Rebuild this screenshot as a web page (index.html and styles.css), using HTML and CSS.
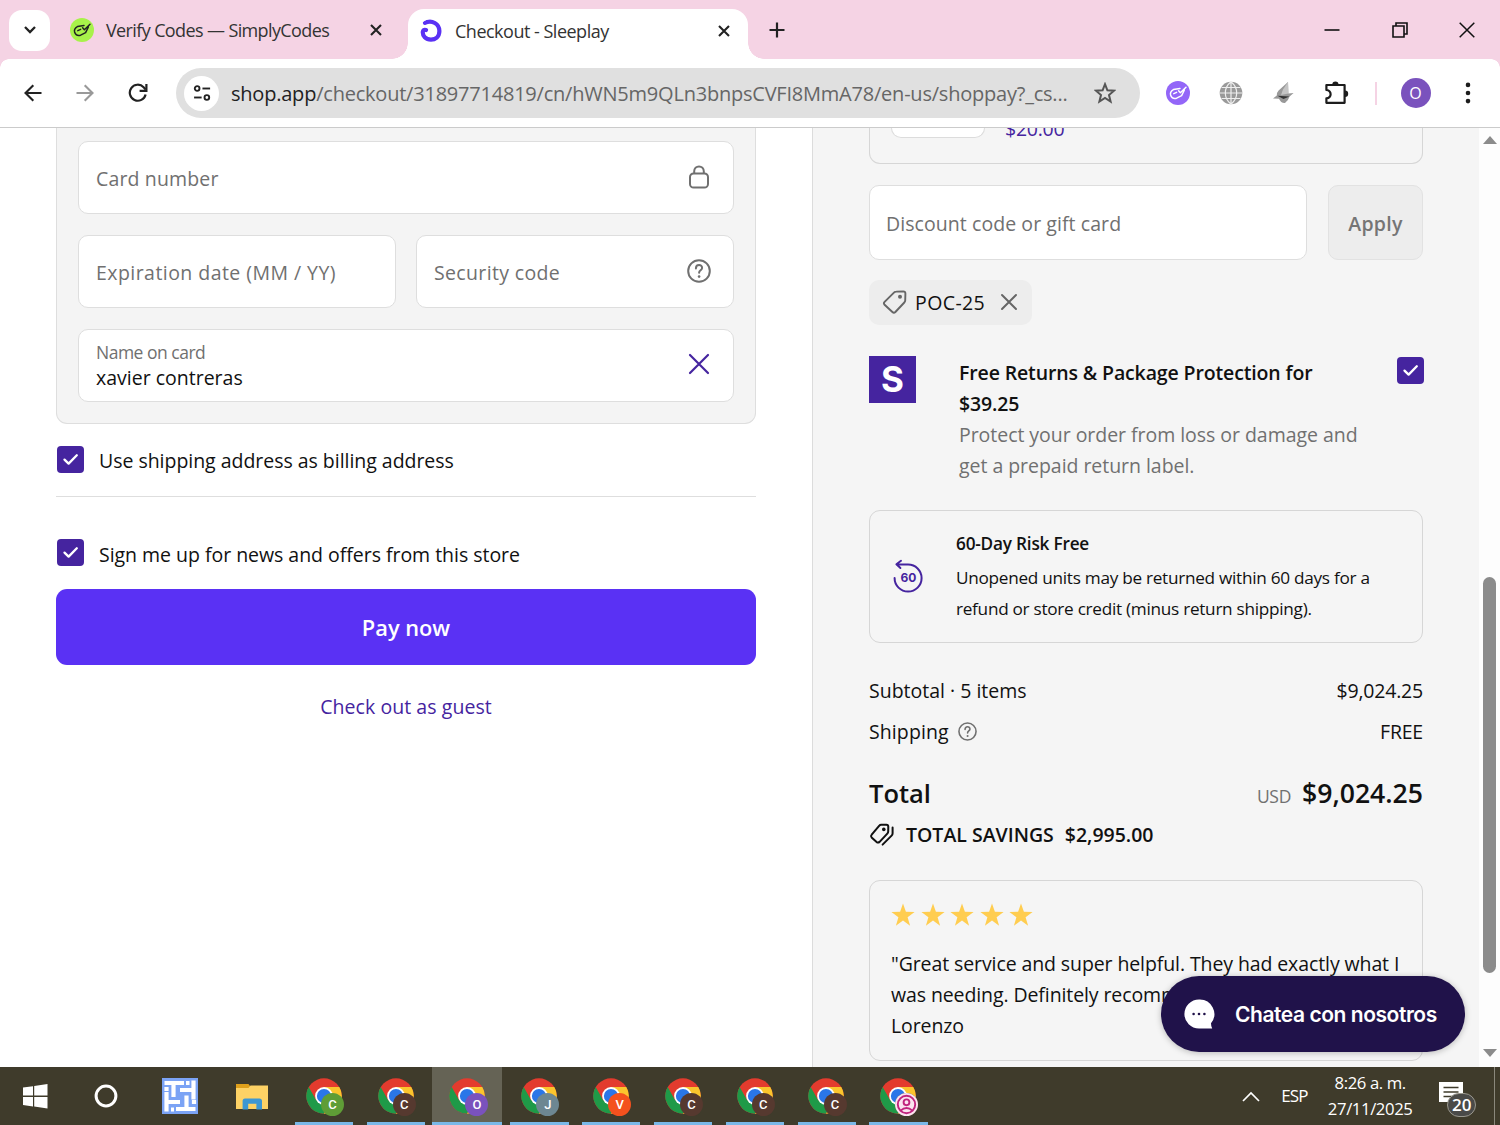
FILE: index.html
```html
<!DOCTYPE html>
<html lang="en">
<head>
  <meta charset="UTF-8" />
  <meta name="viewport" content="width=device-width, initial-scale=1.0"/>
  <title>Checkout - Sleeplay</title>
  <link rel="stylesheet" href="styles.css">
</head>
<body>
  <svg class="defs" width="0" height="0">
    <symbol id="chrome" viewBox="0 0 36 36">
      <circle cx="18" cy="18" r="17.7" fill="#e33b2e"/>
      <path d="M2.7 9.1 A17.7 17.7 0 0 0 18 35.7 L25.7 22.4 L18 18 L10.3 22.4Z" fill="#1f9a48"/>
      <path d="M33.3 9.1 A17.7 17.7 0 0 1 18 35.7 L25.7 22.4 L18 9.1Z" fill="#fbc52d"/>
      <circle cx="18" cy="18" r="8.9" fill="#fff"/>
      <circle cx="18" cy="18" r="7.1" fill="#2a76e8"/>
    </symbol>
    <symbol id="check" viewBox="0 0 27 27">
      <path d="M7.5 13.6 L11.6 17.6 L19.8 9.2" fill="none" stroke="#fff" stroke-width="2.3" stroke-linecap="round" stroke-linejoin="round"/>
    </symbol>
    <symbol id="help" viewBox="0 0 24 24">
      <circle cx="12" cy="12" r="10.8" fill="none" stroke="currentColor" stroke-width="2"/>
      <path d="M8.9 9.4 C9 4.9 15.2 5.1 15.1 9 C15 11.4 12.1 11.3 12.1 13.8" fill="none" stroke="currentColor" stroke-width="2" stroke-linecap="round"/>
      <circle cx="12.1" cy="17.6" r="1.3" fill="currentColor"/>
    </symbol>
    <symbol id="star" viewBox="0 0 24 24">
      <path d="M12 0.5 L14.9 8.7 L23.6 8.9 L16.6 14.2 L19.1 22.7 L12 17.6 L4.9 22.7 L7.4 14.2 L0.4 8.9 L9.1 8.7Z" fill="#ffcd50"/>
    </symbol>
    <symbol id="codes" viewBox="0 0 24 24">
      <path d="M14 7.4 L7.4 8.6 Q3.8 10.6 4.6 14 Q6 18.4 10.6 17.2 L15.6 14.6 L18.4 9 M12.6 9.8 L14.4 11.8 L20 6.2 M7.8 12.6 L10.6 11.4" fill="none" stroke="currentColor" stroke-width="1.5" stroke-linecap="round" stroke-linejoin="round"/>
    </symbol>
  </svg>

  <div class="tabstrip">
    <div class="tab-search">
      <svg width="14" height="10" viewBox="0 0 14 10"><path d="M2 2 L7 7 L12 2" fill="none" stroke="#222" stroke-width="2.3"/></svg>
    </div>
    <div class="tab">
      <svg class="favicon lime" width="24" height="24"><use href="#codes"/></svg>
      <span class="tab-title w-verify">Verify Codes — SimplyCodes</span>
      <svg width="12" height="12" viewBox="0 0 12 12"><path d="M1 1 L11 11 M11 1 L1 11" stroke="#222" stroke-width="2.1"/></svg>
    </div>
    <div class="tab active">
      <svg class="favicon" width="24" height="24" viewBox="0 0 24 24"><path d="M6 3.8 C13 .8 20.3 4.6 20.4 12 C20.4 18 16 20.6 12 20.6 C6.5 20.6 3.6 17 3.8 13 C4 10.8 5 10.4 7 11" fill="none" stroke="#5a31f4" stroke-width="4.2" stroke-linecap="round"/></svg>
      <span class="tab-title">Checkout - Sleeplay</span>
      <svg width="12" height="12" viewBox="0 0 12 12"><path d="M1 1 L11 11 M11 1 L1 11" stroke="#222" stroke-width="2.1"/></svg>
    </div>
    <svg class="new-tab" width="16" height="16" viewBox="0 0 16 16"><path d="M8 .5 V15.5 M.5 8 H15.5" stroke="#222" stroke-width="2.2"/></svg>
    <div class="win-buttons">
      <svg width="16" height="16" viewBox="0 0 16 16"><path d="M.5 8 H15.5" stroke="#111" stroke-width="1.6"/></svg>
      <svg width="16" height="16" viewBox="0 0 16 16"><path d="M1 4 H12 V15 H1Z M4 4 V1 H15 V12 H12" fill="none" stroke="#111" stroke-width="1.6"/></svg>
      <svg width="16" height="16" viewBox="0 0 16 16"><path d="M.7 .7 L15.3 15.3 M15.3 .7 L.7 15.3" stroke="#111" stroke-width="1.5"/></svg>
    </div>
  </div>

  <div class="toolbar">
    <div class="nav">
      <svg width="18" height="18" viewBox="0 0 18 18"><path d="M17.5 9 H2 M9.3 1.2 L1.5 9 L9.3 16.8" fill="none" stroke="#222" stroke-width="2.1"/></svg>
      <svg width="18" height="18" viewBox="0 0 18 18"><path d="M.5 9 H16 M8.7 1.2 L16.5 9 L8.7 16.8" fill="none" stroke="#999" stroke-width="2.1"/></svg>
      <svg width="20" height="20" viewBox="0 0 20 20"><path d="M17.6 11.5 A8 8 0 1 1 15.6 4.2 L17.6 6.4" fill="none" stroke="#222" stroke-width="2.2"/><path d="M18.4 1 V7.9 H11.6" fill="none" stroke="#222" stroke-width="2.2"/></svg>
    </div>
    <div class="omnibox">
      <div class="site-info">
        <svg width="18" height="18" viewBox="0 0 20 18"><g fill="none" stroke="#222" stroke-width="2.1"><circle cx="4.6" cy="4" r="2.6"/><path d="M10.5 4 H19"/><circle cx="15.4" cy="14" r="2.6"/><path d="M1.2 14 H9.6"/></g></svg>
      </div>
      <div class="url"><b>shop.app</b>/checkout/31897714819/cn/hWN5m9QLn3bnpsCVFI8MmA78/en-us/shoppay?_cs...</div>
      <svg width="22" height="22" viewBox="0 0 22 22"><path d="M11 2.2 L13.4 8.3 L20 8.7 L15 13 L16.6 19.5 L11 15.9 L5.4 19.5 L7 13 L2 8.7 L8.6 8.3Z" fill="none" stroke="#555" stroke-width="2"/></svg>
    </div>
    <div class="extensions">
      <svg class="favicon violet" width="24" height="24"><use href="#codes"/></svg>
      <svg width="24" height="24" viewBox="0 0 24 24"><circle cx="12" cy="12" r="11.3" fill="#999"/><path d="M12 0 V24 M1 12 H23 M2.6 6.5 H21.4 M2.6 17.5 H21.4 M12 .8 C4.4 7 4.4 17 12 23.2 C19.6 17 19.6 7 12 .8" fill="none" stroke="#eee" stroke-width="1.2"/></svg>
      <svg width="24" height="24" viewBox="0 0 24 24"><path d="M17 1 L7.6 9.6 Q5.4 12 5.8 14.6 L2 17.6 L8 17.8 Q10 22.4 14 22 Q17.6 19 18.6 15.4 L22.6 12 L17.4 12.6Z" fill="#999"/><path d="M17 1 L12 8.6 L10 14 L17.4 12.6Z" fill="#c4c4c4"/><path d="M6.5 14.8 L18.4 15.4 L12.5 17.9Z" fill="#333"/></svg>
      <svg width="26" height="26" viewBox="0 0 26 26"><path d="M2.4 5 H20.6 V22.8 H2.4 V18.4 C8 17.6 8 10.8 2.4 10Z" fill="none" stroke="#1d1d1d" stroke-width="2.2" stroke-linejoin="round"/><path d="M8.3 4.6 A3.1 3.1 0 0 1 14.5 4.6Z M21 10.6 A3.2 3.2 0 0 1 21 17Z" fill="#1d1d1d"/></svg>
      <span class="separator"></span>
      <span class="avatar">O</span>
      <svg class="menu" width="6" height="22" viewBox="0 0 6 22"><g fill="#1d1d1d"><circle cx="3" cy="2.9" r="2.3"/><circle cx="3" cy="11" r="2.3"/><circle cx="3" cy="19.1" r="2.3"/></g></svg>
    </div>
  </div>

  <div class="page">
    <div class="payment">
      <div class="card-form">
        <div class="field"><span class="w-card">Card number</span>
          <svg width="24" height="26" viewBox="0 0 24 26"><g fill="none" stroke="#707070" stroke-width="2"><rect x="3" y="9.5" width="18" height="14" rx="3.6"/><path d="M7.2 9.5 V7.2 A4.8 4.8 0 0 1 16.8 7.2 V9.5"/></g></svg>
        </div>
        <div class="field-row">
          <div class="field"><span class="w-exp">Expiration date (MM / YY)</span></div>
          <div class="field"><span class="w-sec">Security code</span>
            <svg class="gray" width="24" height="24"><use href="#help"/></svg>
          </div>
        </div>
        <div class="field filled">
          <div>
            <div class="field-label">Name on card</div>
            <div class="field-value">xavier contreras</div>
          </div>
          <svg width="24" height="24" viewBox="0 0 24 24"><path d="M3 3 L21 21 M21 3 L3 21" stroke="#45249f" stroke-width="2.2" stroke-linecap="round"/></svg>
        </div>
      </div>
      <div class="option">
        <svg class="checkbox" width="27" height="27"><use href="#check"/></svg>
        <span>Use shipping address as billing address</span>
      </div>
      <div class="option news">
        <svg class="checkbox" width="27" height="27"><use href="#check"/></svg>
        <span>Sign me up for news and offers from this store</span>
      </div>
      <div class="pay-btn">Pay now</div>
      <div class="guest">Check out as guest</div>
    </div>

    <div class="summary">
      <div class="upsell">
        <span class="stepper"></span>
        <span class="upsell-price">$20.00</span>
      </div>
      <div class="discount">
        <div class="code-input"><span>Discount code or gift card</span></div>
        <div class="apply">Apply</div>
      </div>
      <div class="chip">
        <svg width="26" height="26" viewBox="0 0 26 26"><path d="M14.2 2.6 L21.2 2.4 Q23.4 2.4 23.4 4.6 L23.2 11.6 Q23.2 12.6 22.3 13.5 L13.4 23 Q11.9 24.4 10.4 23 L2.6 15.8 Q1.2 14.3 2.6 12.8 L12.2 3.4 Q13 2.6 14.2 2.6Z" fill="none" stroke="#666" stroke-width="1.9"/><circle cx="18" cy="7.7" r="2" fill="#666"/></svg>
        <span>POC-25</span>
        <svg width="18" height="18" viewBox="0 0 18 18"><path d="M2 2 L16 16 M16 2 L2 16" stroke="#666" stroke-width="2" stroke-linecap="round"/></svg>
      </div>
      <div class="protection">
        <div class="logo">S</div>
        <div class="protection-text">
          <div class="strong">Free Returns &amp; Package Protection for</div>
          <div class="strong">$39.25</div>
          <div class="muted">Protect your order from loss or damage and</div>
          <div class="muted">get a prepaid return label.</div>
        </div>
        <svg class="checkbox" width="27" height="27"><use href="#check"/></svg>
      </div>
      <div class="risk">
        <svg width="34" height="36" viewBox="0 0 34 36"><path d="M3.6 19 A13.5 13.5 0 1 0 17 5.6 L6 5.2 M10 1.8 L5.4 5.2 L9.4 9" fill="none" stroke="#45249f" stroke-width="2" stroke-linecap="round" stroke-linejoin="round"/><text x="17.5" y="23.4" class="sixty">60</text></svg>
        <div>
          <div class="risk-title">60-Day Risk Free</div>
          <div>Unopened units may be returned within 60 days for a</div>
          <div>refund or store credit (minus return shipping).</div>
        </div>
      </div>
      <div class="line"><span>Subtotal · 5 items</span><span class="amount">$9,024.25</span></div>
      <div class="line"><span class="with-icon">Shipping <svg class="gray" width="19" height="19" viewBox="0 0 24 24"><use href="#help"/></svg></span><span class="amount">FREE</span></div>
      <div class="total"><span>Total</span><span class="total-amount"><small>USD</small>$9,024.25</span></div>
      <div class="savings">
        <svg width="26" height="24" viewBox="0 0 26 24"><g fill="none" stroke="#111" stroke-width="2" stroke-linecap="round" stroke-linejoin="round"><path d="M12.2 1.8 L17.4 1.8 Q19.3 1.9 19.3 3.8 L19.2 8.4 Q19.2 9.6 18.3 10.6 L10.6 18.9 Q9 20.2 7.6 19 L2.6 14.4 Q1.4 13 2.7 11.6 L10.1 2.8 Q11 1.8 12.2 1.8Z"/><path d="M23.6 4.6 V10.2 Q23.6 11.6 22.6 12.6 L13.6 21.6"/></g><circle cx="14.8" cy="6.4" r="1.8" fill="#111"/></svg>
        <span class="savings-label">TOTAL SAVINGS</span><span>$2,995.00</span>
      </div>
      <div class="review">
        <div class="stars">
          <svg width="24" height="24"><use href="#star"/></svg>
          <svg width="24" height="24"><use href="#star"/></svg>
          <svg width="24" height="24"><use href="#star"/></svg>
          <svg width="24" height="24"><use href="#star"/></svg>
          <svg width="24" height="24"><use href="#star"/></svg>
        </div>
        <div>"Great service and super helpful. They had exactly what I</div>
        <div>was needing. Definitely recommend."</div>
        <div>Lorenzo</div>
      </div>
    </div>

    <div class="scrollbar">
      <svg width="14" height="8" viewBox="0 0 14 8"><path d="M7 0 L14 8 H0Z" fill="#8b8b8b"/></svg>
      <span class="thumb"></span>
      <svg width="14" height="8" viewBox="0 0 14 8"><path d="M7 8 L14 0 H0Z" fill="#8b8b8b"/></svg>
    </div>

    <div class="chat">
      <svg width="32" height="32" viewBox="0 0 32 32"><path d="M16 1.4 A14.6 14.6 0 1 0 16 30.6 H29.2 Q28 28.4 28 25.2 A14.6 14.6 0 0 0 16 1.4Z" fill="#fff"/><g fill="#20124a"><circle cx="10.6" cy="16" r="1.3"/><circle cx="16" cy="16" r="1.3"/><circle cx="21.4" cy="16" r="1.3"/></g></svg>
      <span>Chatea con nosotros</span>
    </div>
  </div>

  <div class="taskbar">
    <div class="slot start"><svg width="25" height="25" viewBox="0 0 25 25"><path d="M0 3.6 L10 2.2 V11.6 H0Z M11.2 2 L24.5 0 V11.6 H11.2Z M0 12.9 H10 V22.4 L0 21Z M11.2 12.9 H24.5 V24.6 L11.2 22.6Z" fill="#fff"/></svg></div>
    <div class="slot cortana"><svg width="24" height="24" viewBox="0 0 24 24"><circle cx="12" cy="12" r="9.9" fill="none" stroke="#fff" stroke-width="3"/></svg></div>
    <div class="slot"><svg width="36" height="36" viewBox="0 0 36 36"><rect width="36" height="36" fill="#7ba3f5"/><path d="M2.5 5 H22 M11.5 5 V19 M31.5 2.5 V21.5 M31.5 12 H18 M33.5 31 H14 M24.5 31 V17.5 M4.5 33.5 V14 M4.5 24 H18 M4.5 9 V13 M24 5 H27.5 M32 26 V22 M9 31.5 H12" fill="none" stroke="#fff" stroke-width="4.2"/></svg></div>
    <div class="slot"><svg width="32" height="27" viewBox="0 0 32 27"><path d="M0 1 H12.5 L14 3 V8 H0Z" fill="#dfa01b"/><path d="M0 5 H12.5 L14.5 2.6 H32 V26 H0Z" fill="#fdd265"/><path d="M6.6 26.4 V18 Q6.6 15.4 9 15.4 H23.4 Q26 15.4 26 18 V26.4 H20.4 V20.8 H12.2 V26.4Z" fill="#3d97d3"/></svg></div>
    <div class="slot app"><svg width="36" height="36"><use href="#chrome"/></svg><span class="badge green">C</span></div>
    <div class="slot app"><svg width="36" height="36"><use href="#chrome"/></svg><span class="badge">C</span></div>
    <div class="slot app current"><svg width="36" height="36"><use href="#chrome"/></svg><span class="badge purple">O</span></div>
    <div class="slot app"><svg width="36" height="36"><use href="#chrome"/></svg><span class="badge slate">J</span></div>
    <div class="slot app"><svg width="36" height="36"><use href="#chrome"/></svg><span class="badge orange">V</span></div>
    <div class="slot app"><svg width="36" height="36"><use href="#chrome"/></svg><span class="badge">C</span></div>
    <div class="slot app"><svg width="36" height="36"><use href="#chrome"/></svg><span class="badge">C</span></div>
    <div class="slot app"><svg width="36" height="36"><use href="#chrome"/></svg><span class="badge">C</span></div>
    <div class="slot app"><svg width="36" height="36"><use href="#chrome"/></svg><span class="badge pink"><svg width="23" height="23" viewBox="0 0 23 23"><circle cx="11.5" cy="11.5" r="11.5" fill="#fbe4f0"/><g fill="none" stroke="#c0247e" stroke-width="1.9"><circle cx="11.5" cy="11.5" r="8.7"/><circle cx="11.5" cy="9.3" r="2.9"/><path d="M5.6 17.6 Q11.5 12.2 17.4 17.6"/></g></svg></span></div>
    <div class="tray">
      <svg width="18" height="11" viewBox="0 0 18 11"><path d="M1 10 L9 2 L17 10" fill="none" stroke="#fff" stroke-width="1.7"/></svg>
      <span class="lang">ESP</span>
      <div class="clock"><div class="time">8:26 a. m.</div><div class="date">27/11/2025</div></div>
      <div class="notify">
        <svg width="24" height="24" viewBox="0 0 24 24"><path d="M0 0 H24 V20 H13 L9 24 V20 H0Z" fill="#fff"/><path d="M4.5 5.5 H19.5 M4.5 10 H19.5 M4.5 14.5 H13" stroke="#3f3b2b" stroke-width="1.6"/></svg>
        <span class="count">20</span>
      </div>
      <span class="show-desktop"></span>
    </div>
  </div>
</body>
</html>
```
FILE: styles.css
```css
* {
  box-sizing: border-box;
}

body {
  margin: 0;
  width: 1500px;
  height: 1125px;
  overflow: hidden;
  display: flex;
  flex-direction: column;
  font-family: "Open Sans", "Noto Sans", sans-serif;
  font-size: 19.5px;
  color: #111;
  background-color: #fff;
  white-space: nowrap;
}

svg {
  display: block;
  flex: none;
}

.defs {
  position: absolute;
}

/* browser tabs */
.tabstrip {
  display: flex;
  align-items: center;
  height: 59px;
  flex: none;
  padding: 1px 25px 0 9px;
  background-color: #f5d3e4;
}

.tab-search {
  display: flex;
  align-items: center;
  justify-content: center;
  width: 41px;
  height: 41px;
  border-radius: 13px;
  background-color: #fff;
}

.tab {
  display: flex;
  align-items: center;
  width: 358px;
  padding: 0 26px 0 20px;
  font-size: 18px;
  color: #333;
}

.tab-title {
  flex: 1;
  padding-left: 12px;
  letter-spacing: -0.5px;
}

.w-verify {
  letter-spacing: -0.62px;
}

.tab.active {
  position: relative;
  width: 340px;
  height: 50px;
  margin-top: 8px;
  padding: 0 18px 6px 11px;
  border-radius: 16px 16px 0 0;
  background-color: #fff;
}

.tab.active::before,
.tab.active::after {
  content: "";
  position: absolute;
  bottom: 0;
  width: 16px;
  height: 16px;
}

.tab.active::before {
  left: -16px;
  background: radial-gradient(circle at 0 0, #f5d3e4 15.5px, #fff 16px);
}

.tab.active::after {
  right: -16px;
  background: radial-gradient(circle at 100% 0, #f5d3e4 15.5px, #fff 16px);
}

.favicon {
  border-radius: 50%;
}

.lime {
  color: #222;
  background-color: #a8f24a;
}

.violet {
  color: #fff;
  background-color: #9366f8;
}

.new-tab {
  margin-left: 21px;
}

.win-buttons {
  display: flex;
  gap: 51.5px;
  margin-left: auto;
}

/* address bar */
.toolbar {
  position: relative;
  display: flex;
  align-items: center;
  height: 69px;
  flex: none;
  padding: 0 29px 0 24px;
  border-bottom: 1px solid #cbcbcb;
  background: radial-gradient(circle at 9px 9px, #fff 8.5px, #f5d3e4 9px) 0 0 / 9px 9px no-repeat,
    radial-gradient(circle at 0 9px, #fff 8.5px, #f5d3e4 9px) 100% 0 / 9px 9px no-repeat, #fff;
}

.nav {
  display: flex;
  align-items: center;
  gap: 34px;
  width: 152px;
}

.omnibox {
  display: flex;
  align-items: center;
  width: 964px;
  height: 50px;
  padding: 0 24px 0 8px;
  border-radius: 25px;
  background-color: #e0e0e0;
}

.site-info {
  display: flex;
  align-items: center;
  justify-content: center;
  width: 35px;
  height: 35px;
  border-radius: 50%;
  background-color: #fff;
}

.url {
  flex: 1;
  padding-left: 12px;
  font-size: 20px;
  letter-spacing: -0.22px;
  color: #666;
}

.url b {
  font-weight: 400;
  color: #222;
}

.extensions {
  display: flex;
  align-items: center;
  flex: 1;
  gap: 28.5px;
  padding-left: 26px;
}

.separator {
  width: 2px;
  height: 23px;
  margin-left: -3px;
  background-color: #f5d3e4;
}

.avatar {
  display: flex;
  align-items: center;
  justify-content: center;
  width: 30px;
  height: 30px;
  margin-left: -5px;
  border-radius: 50%;
  background-color: #7a52bd;
  color: #fff;
  font-size: 16px;
}

.menu {
  margin-left: auto;
}

/* page */
.page {
  position: relative;
  display: flex;
  height: 939px;
  flex: none;
  overflow: hidden;
}

.payment {
  width: 812px;
  padding: 0 56px;
}

.card-form {
  display: flex;
  flex-direction: column;
  gap: 21px;
  height: 296px;
  padding: 13px 21px 0;
  border: 1px solid #dedede;
  border-top: none;
  border-radius: 0 0 11px 11px;
  background-color: #f4f4f4;
}

.field {
  display: flex;
  align-items: center;
  justify-content: space-between;
  flex: 1;
  max-height: 73px;
  min-height: 73px;
  padding: 2px 22px 0 17px;
  border: 1px solid #dedede;
  border-radius: 10px;
  background-color: #fff;
  color: #707070;
}

.field svg {
  margin-top: -3px;
}

.field-row {
  display: flex;
  gap: 20px;
}

.w-card {
  letter-spacing: 0.15px;
}

.w-exp {
  letter-spacing: 0.45px;
}

.w-sec {
  letter-spacing: 0.35px;
}

.filled {
  padding-top: 0;
}

.field-label {
  line-height: 25px;
  font-size: 17.5px;
  letter-spacing: -0.5px;
}

.field-value {
  line-height: 26px;
  color: #111;
}

.option {
  display: flex;
  align-items: center;
  gap: 15px;
  height: 73px;
  padding: 0 0 2px 1px;
  border-bottom: 1px solid #dedede;
  letter-spacing: -0.03px;
}

.option.news {
  height: 92px;
  padding-top: 21px;
  border-bottom: none;
}

.option span {
  padding-top: 3px;
}

.checkbox {
  border-radius: 4px;
  background-color: #45249f;
}

.pay-btn {
  display: flex;
  align-items: center;
  justify-content: center;
  height: 76px;
  padding-top: 1px;
  border-radius: 11px;
  background-color: #5a31f4;
  color: #fff;
  font-size: 21.8px;
  font-weight: 600;
}

.guest {
  margin-top: 27px;
  line-height: 30px;
  text-align: center;
  letter-spacing: 0.06px;
  color: #45249f;
}

/* order summary */
.summary {
  width: 667px;
  padding: 0 56px;
  border-left: 1px solid #dcdcdc;
  background-color: #f5f5f5;
}

.upsell {
  display: flex;
  height: 36px;
  padding-left: 21px;
  border: 1px solid #d6d6d6;
  border-top: none;
  border-radius: 0 0 11px 11px;
}

.stepper {
  width: 94px;
  height: 10px;
  border: 1px solid #dcdcdc;
  border-top: none;
  border-radius: 0 0 10px 10px;
  background-color: #fff;
}

.upsell-price {
  margin: -14px 0 0 20px;
  line-height: 30px;
  letter-spacing: -0.25px;
  color: #45249f;
}

.discount {
  display: flex;
  gap: 21px;
  margin-top: 21px;
}

.code-input {
  display: flex;
  align-items: center;
  flex: 1;
  height: 75px;
  padding: 1px 16px 0;
  border: 1px solid #dedede;
  border-radius: 10px;
  background-color: #fff;
  letter-spacing: 0.07px;
  color: #707070;
}

.apply {
  display: flex;
  align-items: center;
  justify-content: center;
  width: 95px;
  padding-top: 1px;
  border: 1px solid #e2e2e2;
  border-radius: 10px;
  background-color: #ededed;
  color: #757575;
  font-weight: 600;
  letter-spacing: 0.3px;
}

.chip {
  display: flex;
  align-items: center;
  width: 163px;
  height: 45px;
  margin-top: 20px;
  padding: 0 0 1px 13px;
  border-radius: 10px;
  background-color: #ededed;
}

.chip span {
  flex: 1;
  padding-left: 7px;
  letter-spacing: 0.4px;
}

.chip svg:last-child {
  margin-right: 14px;
}

.protection {
  display: flex;
  height: 155px;
  margin-top: 30px;
}

.logo {
  width: 47px;
  height: 47px;
  margin-top: 1px;
  background-color: #45249f;
  color: #fff;
  font-family: Inter, sans-serif;
  font-size: 35px;
  font-weight: 700;
  line-height: 47px;
  text-align: center;
}

.protection-text {
  flex: 1;
  padding: 2px 0 0 43px;
  line-height: 31px;
}

.protection .checkbox {
  margin: 2px -1px 0 0;
}

.strong {
  font-weight: 600;
  letter-spacing: -0.13px;
}

.muted {
  letter-spacing: -0.04px;
  color: #707070;
}

.risk {
  display: flex;
  align-items: center;
  height: 133px;
  padding: 0 0 0 21px;
  border: 1px solid #d6d6d6;
  border-radius: 11px;
  font-size: 17.2px;
  letter-spacing: -0.28px;
  line-height: 31px;
}

.risk > div {
  padding: 0 0 2px 31px;
}

.risk-title {
  margin-bottom: 3px;
  font-weight: 600;
  letter-spacing: -0.2px;
}

.sixty {
  font-family: Inter, sans-serif;
  font-size: 12px;
  font-weight: 700;
  letter-spacing: 0;
  fill: #45249f;
  text-anchor: middle;
}

.line {
  display: flex;
  align-items: center;
  justify-content: space-between;
  height: 41px;
}

.risk + .line {
  margin-top: 27px;
}

.amount {
  letter-spacing: -0.2px;
}

.with-icon {
  display: flex;
  align-items: center;
  gap: 9px;
  letter-spacing: 0.1px;
}

.gray {
  color: #707070;
}

.total {
  display: flex;
  align-items: baseline;
  justify-content: space-between;
  margin-top: 20px;
  height: 42px;
  line-height: 42px;
  font-size: 25.5px;
  font-weight: 600;
}

.total-amount {
  font-size: 26.6px;
}

.total small {
  margin-right: 11px;
  font-size: 17.5px;
  font-weight: 400;
  letter-spacing: -0.3px;
  color: #707070;
}

.savings {
  display: flex;
  align-items: center;
  height: 41px;
  font-weight: 600;
}

.savings-label {
  padding: 0 11px;
}

.review {
  height: 181px;
  margin-top: 25px;
  padding: 22px 20px 0 21px;
  border: 1px solid #d6d6d6;
  border-radius: 11px;
  letter-spacing: -0.1px;
  line-height: 31px;
}

.stars {
  display: flex;
  gap: 5.5px;
  margin-bottom: 21px;
}

/* scrollbar */
.scrollbar {
  display: flex;
  flex-direction: column;
  align-items: center;
  width: 21px;
  padding: 8px 0 10px;
  background-color: #fdfdfd;
}

.thumb {
  width: 13px;
  height: 396px;
  margin: 433px 0 auto;
  border-radius: 7px;
  background-color: #8b8b8b;
}

/* floats over the order summary */
.chat {
  position: absolute;
  right: 35px;
  bottom: 15px;
  display: flex;
  align-items: center;
  gap: 20px;
  width: 304px;
  height: 76px;
  padding-left: 22px;
  border-radius: 38px;
  background-color: #20124a;
  box-shadow: 0 1px 6px rgba(0, 0, 0, 0.25);
  color: #fff;
  font-family: Inter, sans-serif;
  font-weight: 600;
  font-size: 21px;
  letter-spacing: -0.45px;
}

/* taskbar */
.taskbar {
  display: flex;
  height: 58px;
  flex: none;
  background-color: #3f3b2b;
  color: #fff;
}

.slot {
  position: relative;
  display: flex;
  align-items: center;
  justify-content: center;
  width: 72px;
}

.start {
  padding-right: 2px;
}

.cortana {
  padding-right: 4px;
}

.app {
  width: 71.8px;
}

.app::after {
  content: "";
  position: absolute;
  left: 7px;
  right: 6.5px;
  bottom: 0;
  height: 3px;
  background-color: #79b8e8;
}

.app.current {
  width: 70px;
  margin: 0 0.9px;
  background-color: #656355;
}

.app.current::after {
  left: 0;
  right: 0;
}

.badge {
  position: absolute;
  left: 33px;
  top: 26px;
  width: 23px;
  height: 23px;
  border-radius: 50%;
  background-color: #56392f;
  font-family: Roboto, sans-serif;
  font-size: 13px;
  font-weight: 500;
  line-height: 23px;
  text-align: center;
}

.green {
  background-color: #5f9d36;
}

.purple {
  background-color: #7a52bd;
}

.slate {
  background-color: #6d8792;
}

.orange {
  background-color: #f4511e;
}

.tray {
  display: flex;
  align-items: center;
  flex: 1;
  padding-left: 308px;
}

.lang {
  width: 48px;
  padding: 0 0 2px 21px;
  font-size: 17px;
  letter-spacing: -0.8px;
}

.clock {
  width: 116px;
  margin-left: 4px;
  padding-bottom: 1px;
  font-size: 16.7px;
  line-height: 26px;
  text-align: center;
  letter-spacing: -0.4px;
}

.notify {
  position: relative;
  margin: -4px 0 0 11px;
}

.count {
  position: absolute;
  left: 8px;
  top: 11px;
  width: 29px;
  height: 24px;
  border: 1px solid #9a988e;
  border-radius: 12px;
  background-color: #4a4a48;
  font-size: 17px;
  font-weight: 600;
  line-height: 22px;
  text-align: center;
}

.show-desktop {
  height: 58px;
  margin: 0 5px 0 auto;
  border-left: 1px solid #8a887c;
}
```
